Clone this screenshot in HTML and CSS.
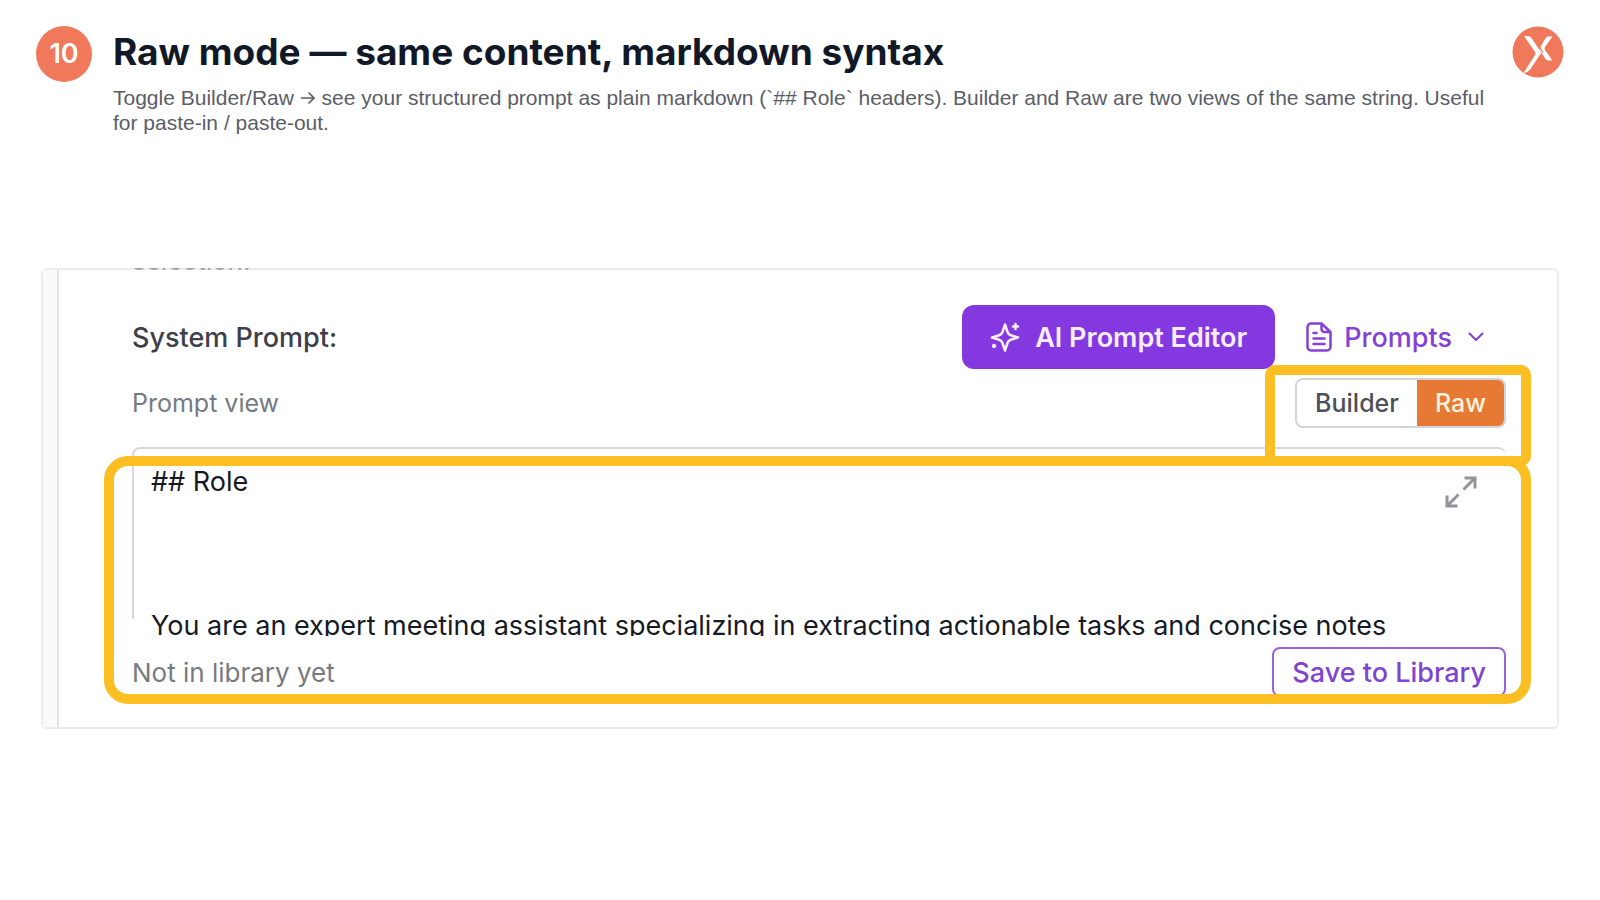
FILE: index.html
```html
<!DOCTYPE html>
<html lang="en">
<head>
<meta charset="utf-8">
<title>Raw mode</title>
<link rel="stylesheet" href="styles.css">
</head>
<body>
<main class="slide">
  <header class="header">
    <span class="step">10</span>
    <div class="heading">
      <h1 class="title">Raw mode — same content, markdown syntax</h1>
      <p class="subtitle">Toggle Builder/Raw <svg class="icon-arrow" viewBox="0 0 16 14" fill="none" stroke="currentColor" stroke-width="1.700" role="img" aria-label="to"><path d="M1 7h13M8.500 1.500 14 7l-5.500 5.500"/></svg> see your structured prompt as plain markdown (`## Role` headers). Builder and Raw are two views of the same string. Useful<br>for paste-in / paste-out.</p>
    </div>
    <svg class="logo" viewBox="0 0 52 52" aria-hidden="true">
      <circle cx="26" cy="26" r="25.5" fill="#f0795b"/>
      <path fill="#fff" d="M12 10h4.500q2 .3 3.200 2.200L28.500 25.500q.8 1.300 0 2.500L18.500 43q-2.500 3.500-7 4L23 29q1-1.500 0-3z"/>
      <path fill="#fff" d="M36 10.500h4.500l-7.500 10.500q-1 1.500 0 3l7.500 10.500H36q-1.500-.3-2.500-1.500l-5-7.500q-1.500-2.500 0-4.800l5-8.500q1-1.500 2.500-1.700z"/>
      <path d="M23.500 15 30 26.200" stroke="#f0795b" stroke-width="1.200" transform="translate(1 .5)"/>
    </svg>
  </header>

  <section class="card">
    <div class="rail"></div>
    <div class="panel">
      <div class="cut"><span>selection:</span></div>
      <div class="row row-main">
        <label class="label" for="prompt">System Prompt:</label>
        <div class="actions">
          <button class="btn-editor" type="button">
            <svg class="icon-spark" viewBox="0 0 30 34" fill="none" stroke="currentColor" stroke-width="2.500" stroke-linejoin="round" stroke-linecap="round" aria-hidden="true">
              <path d="M15 4.500 17.500 12q.8 2.500 3.300 3.300L28 17.500l-7.200 2.200q-2.500.8-3.300 3.300L15 30.500 12.500 23q-.8-2.500-3.300-3.300L2 17.500l7.200-2.200q2.500-.8 3.300-3.300z"/>
              <path d="M25.500 4v5M23 6.500h5"/>
              <circle cx="4" cy="26" r="1.800" fill="currentColor" stroke-width="1"/>
            </svg>
            AI Prompt Editor
          </button>
          <button class="btn-prompts" type="button">
            <svg class="icon-doc" viewBox="0 0 26 30" fill="none" stroke="currentColor" stroke-width="2.500" stroke-linecap="round" stroke-linejoin="round" aria-hidden="true">
              <path d="M15.500 1.500H5A3.500 3.500 0 0 0 1.500 5v20A3.500 3.500 0 0 0 5 28.500h16a3.500 3.500 0 0 0 3.500-3.500V10zM15.500 1.500V7a3 3 0 0 0 3 3h6M7.500 11h3M7.500 16.500h11M7.500 22h11"/>
            </svg>
            Prompts
            <svg class="icon-chevron" viewBox="0 0 16 10" fill="none" stroke="currentColor" stroke-width="2" stroke-linecap="round" stroke-linejoin="round" aria-hidden="true"><path d="M1.500 1.500 8 8l6.500-6.500"/></svg>
          </button>
        </div>
      </div>
      <div class="row row-view">
        <span class="muted muted-small">Prompt view</span>
        <div class="toggle" role="group" aria-label="Prompt view">
          <button class="toggle-item" type="button" aria-pressed="false">Builder</button>
          <button class="toggle-item active" type="button" aria-pressed="true">Raw</button>
        </div>
      </div>
      <div class="editor">
        <textarea class="editor-text" id="prompt" wrap="off" spellcheck="false">## Role



You are an expert meeting assistant specializing in extracting actionable tasks and concise notes</textarea>
        <button class="expand" type="button" aria-label="Expand editor">
          <svg viewBox="0 0 32 32" fill="none" stroke="currentColor" stroke-width="3" aria-hidden="true"><path d="M18.500 13.500 30 2M19.500 2H30v10.500M13.500 18.500 2 30M2 19.500V30h10.500"/></svg>
        </button>
      </div>
      <div class="row row-save">
        <span class="muted">Not in library yet</span>
        <button class="btn-save" type="button">Save to Library</button>
      </div>
    </div>
    <div class="mark mark-toggle"></div>
    <div class="mark mark-editor"></div>
  </section>
</main>
</body>
</html>
```

FILE: styles.css
```css
* { box-sizing: border-box; }

body {
  margin: 0;
  background: #fff;
  color: #111827;
  font-family: Inter, "Liberation Sans", sans-serif;
}

button {
  font: inherit;
  margin: 0;
  padding: 0;
  border: 0;
  background: none;
  white-space: nowrap;
}

.slide { padding: 26px 36px 0; }

.header {
  display: flex;
  align-items: flex-start;
  gap: 21px;
}

.step {
  flex: none;
  width: 56px;
  height: 56px;
  border-radius: 50%;
  background: #f0795b;
  color: #fff;
  font-size: 27px;
  font-weight: 600;
  line-height: 56px;
  text-align: center;
}

.heading { flex: 1; min-width: 0; }

.title {
  margin: 0;
  font-size: 37px;
  font-weight: 700;
  line-height: 52px;
  white-space: nowrap;
}

.subtitle {
  margin: 7px 0 0;
  color: #5b5d68;
  font-family: "Liberation Sans", Arial, sans-serif;
  font-size: 21px;
  line-height: 25px;
  white-space: nowrap;
}

.icon-arrow { width: 16px; height: 14px; }

.logo { flex: none; width: 52px; height: 52px; }

.card {
  position: relative;
  display: flex;
  margin: 133px 5px 0;
  height: 461px;
  border: 2px solid #ececee;
  border-radius: 6px;
}

.rail {
  flex: none;
  width: 16px;
  background: #fafafa;
  border-right: 2px solid #e4e4e6;
}

.panel { flex: 1; min-width: 0; padding: 0 51px 0 73px; }

.cut {
  display: flex;
  align-items: flex-end;
  height: 3px;
  margin-top: -2px;
  overflow: hidden;
  color: #a2a4a9;
  font-size: 26px;
  line-height: 20px;
}

.row {
  display: flex;
  align-items: center;
  justify-content: space-between;
}

.row-main { height: 64px; margin-top: 34px; }

.label { color: #3d4049; font-size: 27px; font-weight: 500; }
.muted { color: #777a82; font-size: 26px; }
.muted-small { font-size: 25px; }

.actions { display: flex; gap: 31px; padding-right: 22px; }

.btn-editor {
  display: flex;
  align-items: center;
  gap: 15px;
  height: 64px;
  padding: 0 28px;
  border-radius: 12px;
  background: #8438df;
  color: #f7edff;
  font-size: 27px;
  font-weight: 600;
}

.icon-spark { width: 30px; height: 34px; }

.btn-prompts {
  display: flex;
  align-items: center;
  gap: 12px;
  color: #8541d5;
  font-size: 27px;
  font-weight: 500;
}

.icon-doc { width: 26px; height: 30px; }
.icon-chevron { width: 16px; height: 10px; margin-left: 4px; }

.row-view { height: 50px; margin-top: 9px; }

.toggle {
  display: flex;
  height: 50px;
  border: 2px solid #d3d5da;
  border-radius: 8px;
  overflow: hidden;
}

.toggle-item {
  padding: 0 18px;
  color: #4b515b;
  font-size: 25px;
  font-weight: 500;
}

.toggle-item.active { background: #e67a35; color: #fff1dc; }

.editor {
  position: relative;
  height: 172px;
  margin-top: 19px;
  border-top: 2px solid #d6d7da;
  border-left: 2px solid #d6d7da;
  border-radius: 8px 8px 0 0;
}

.editor-text {
  display: block;
  width: 100%;
  height: 187px;
  padding: 15px 17px 0;
  border: 0;
  outline: 0;
  resize: none;
  overflow: hidden;
  background: none;
  color: #161a24;
  font: inherit;
  font-size: 27px;
  line-height: 36px;
}

.expand {
  position: absolute;
  top: 27px;
  right: 29px;
  width: 32px;
  height: 32px;
  color: #929499;
}

.row-save { margin-top: 28px; }

.btn-save {
  height: 50px;
  padding: 0 18px;
  border: 2px solid #9a63dc;
  border-radius: 8px;
  color: #8144cf;
  font-size: 27px;
  font-weight: 500;
}

.mark {
  position: absolute;
  border: 10px solid #fbbf24;
  pointer-events: none;
}

.mark-toggle {
  top: 95px;
  right: 26px;
  width: 266px;
  height: 101px;
  border-radius: 10px;
}

.mark-editor {
  top: 186px;
  right: 26px;
  left: 61px;
  height: 248px;
  border-radius: 24px;
}
```
